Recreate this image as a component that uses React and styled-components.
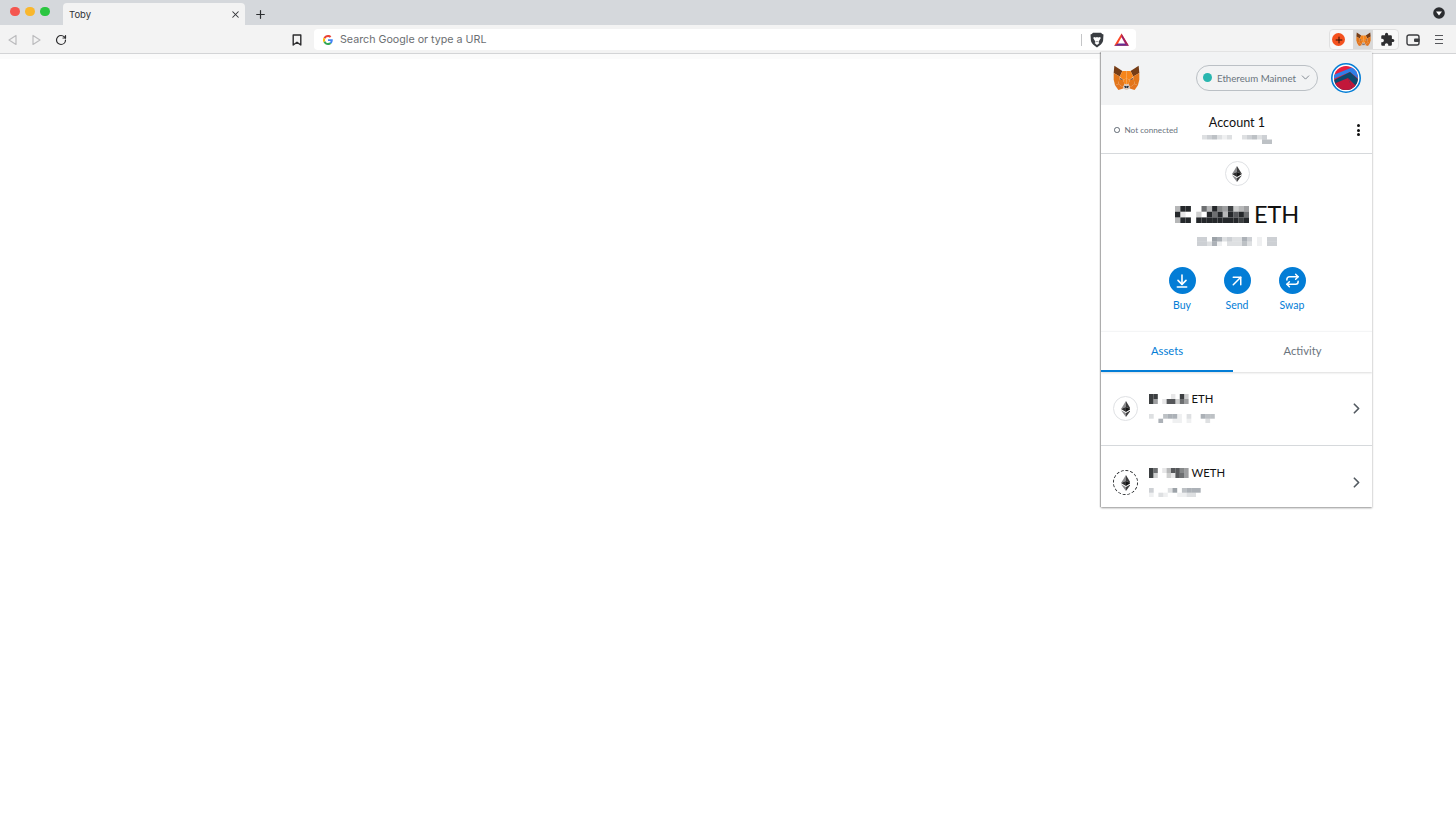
import React from 'react';
import styled, { createGlobalStyle } from 'styled-components';
import { ArrowDownToLine, ArrowUpRight, ChevronDown, ChevronRight, Plus, Repeat, RotateCw, X } from 'lucide-react';
import { MdExtension } from 'react-icons/md';

const GlobalStyle = createGlobalStyle`
  html, body { margin: 0; padding: 0; height: 100%; background: #fff; overflow: hidden; }
  #root { height: 100%; }
  * { box-sizing: border-box; }
`;

const Page = styled.div`
  position: relative;
  height: 819px;
  background: #fff;
  font-family: Inter, 'Liberation Sans', sans-serif;
`;

/* browser chrome */
const TabStrip = styled.div`
  display: flex;
  align-items: flex-end;
  height: 25px;
  padding-right: 11px;
  background: #d5d8dc;
`;

const Lights = styled.div`
  display: flex;
  gap: 5.5px;
  align-self: flex-start;
  width: 63px;
  padding: 6.5px 0 0 10px;
`;

const Light = styled.span`
  width: 9.5px;
  height: 9.5px;
  border-radius: 50%;
  background: ${p => p.$color};
`;

const Tab = styled.div`
  display: flex;
  align-items: center;
  justify-content: space-between;
  width: 182px;
  height: 22px;
  padding: 0 4px 0 6px;
  border-radius: 4px 4px 0 0;
  background: #f3f3f3;
  color: #303236;
  font-size: 9.5px;
`;

const NewTab = styled.div`
  display: flex;
  align-items: center;
  height: 22px;
  margin-left: 9px;
  color: #2b2d30;
`;

const TabMenu = styled.div`
  margin-left: auto;
  align-self: center;
  display: flex;
`;

const Toolbar = styled.div`
  display: flex;
  align-items: center;
  height: 29px;
  padding-top: 1px;
  border-bottom: 1px solid #d3d4d6;
  background: #f3f3f3;
`;

const NavIcons = styled.div`
  display: flex;
  align-items: center;
  gap: 13px;
  width: 314px;
  padding-left: 6.5px;
  color: #2c2c2e;
`;

const BookmarkSlot = styled.span`
  display: flex;
  margin-left: 212px;
`;

const Omnibox = styled.div`
  display: flex;
  align-items: center;
  width: 822px;
  height: 21px;
  padding: 0 7px 0 9px;
  border-radius: 4px;
  background: #fff;
`;

const OmniText = styled.span`
  flex: 1;
  margin-left: 7px;
  color: #6b6e72;
  font-size: 10.7px;
`;

const OmniDivider = styled.span`
  width: 1px;
  height: 12px;
  margin-right: 8px;
  background: #c4c5c7;
`;

const OmniIcons = styled.div`
  display: flex;
  align-items: center;
  gap: 10px;
`;

const ExtensionGroup = styled.div`
  display: flex;
  align-items: stretch;
  width: 70px;
  height: 21px;
  margin-left: 193px;
  border: 1px solid #e0e0e0;
  border-radius: 4px;
  background: #f8f8f8;
`;

const ExtensionCell = styled.div`
  display: flex;
  align-items: center;
  justify-content: center;
  width: ${p => p.$w}px;
  padding-right: ${p => p.$trim || 0}px;
  padding-left: ${p => p.$nudge || 0}px;
  background: ${p => (p.$active ? '#d9d9d9' : 'transparent')};
  color: #2e2e30;
`;

const OrangeDot = styled.span`
  display: flex;
  align-items: center;
  justify-content: center;
  width: 13px;
  height: 13px;
  border-radius: 50%;
  background: #f4511e;
  color: #2a1208;
`;

const EndIcons = styled.div`
  display: flex;
  align-items: center;
  gap: 14px;
  margin-left: 7px;
`;

const HeaderFade = styled.div`
  height: 5px;
  margin-right: 356px;
  background: #fbfbfb;
`;

/* wallet popup */
const Popup = styled.div`
  position: absolute;
  top: 52px;
  left: 1101px;
  width: 271px;
  height: 455px;
  display: flex;
  flex-direction: column;
  overflow: hidden;
  background: #fff;
  box-shadow: -1px 0 1px rgba(0, 0, 0, 0.22), 0 1px 2px rgba(0, 0, 0, 0.4);
  font-family: Lato, 'Open Sans', sans-serif;
`;

const PopupHeader = styled.div`
  display: flex;
  flex-shrink: 0;
  align-items: center;
  height: 53px;
  padding: 0 11px 2px 12px;
  background: #f2f3f4;
`;

const NetworkPill = styled.div`
  display: flex;
  align-items: center;
  width: 122px;
  height: 26px;
  margin-left: auto;
  margin-right: 13px;
  padding: 0 5px 0 6px;
  border: 1px solid #bbc0c5;
  border-radius: 13px;
  color: #6a737d;
  font-size: 9.7px;
`;

const NetworkDot = styled.span`
  width: 9px;
  height: 9px;
  margin-right: 5px;
  border-radius: 50%;
  background: #29b6af;
`;

const NetworkName = styled.span`
  flex: 1;
  white-space: nowrap;
`;

const AccountBar = styled.div`
  position: relative;
  display: flex;
  flex-shrink: 0;
  flex-direction: column;
  align-items: center;
  height: 49px;
  padding-top: 10px;
  border-bottom: 1px solid #d6d9dc;
`;

const AccountName = styled.div`
  height: 17px;
  margin-bottom: 3px;
  margin-left: 1px;
  color: #111;
  font-size: 12.6px;
  line-height: 16px;
`;

const ConnectionStatus = styled.div`
  position: absolute;
  top: 20px;
  left: 13px;
  display: flex;
  align-items: center;
  gap: 5px;
  color: #6a737d;
  font-size: 8.2px;
`;

const StatusRing = styled.span`
  width: 5.5px;
  height: 5.5px;
  border: 1px solid #5f6873;
  border-radius: 50%;
`;

const Kebab = styled.div`
  position: absolute;
  top: 19px;
  right: 12px;
  display: flex;
  flex-direction: column;
  gap: 1.5px;
`;

const KebabDot = styled.span`
  width: 3px;
  height: 3px;
  border-radius: 50%;
  background: #111;
`;

const Balance = styled.div`
  display: flex;
  flex-shrink: 0;
  flex-direction: column;
  align-items: center;
  height: 177px;
  padding-top: 7px;
  padding-left: 1px;
`;

const TokenCircle = styled.div`
  display: flex;
  align-items: center;
  justify-content: center;
  flex-shrink: 0;
  width: ${p => p.$size}px;
  height: ${p => p.$size}px;
  border-radius: 50%;
  border: 1px ${p => (p.$dashed ? 'dashed #24272a' : 'solid #dfe1e4')};
`;

const BalanceRow = styled.div`
  display: flex;
  align-items: center;
  gap: 5px;
  margin-top: 14px;
  color: #111;
  font-size: 23.5px;
  line-height: 29px;
`;

const BalanceFiat = styled.div`
  display: flex;
  margin-top: 8px;
`;

const Actions = styled.div`
  display: flex;
  justify-content: center;
  gap: 28px;
  margin-top: 21px;
`;

const Action = styled.div`
  display: flex;
  flex-direction: column;
  align-items: center;
  gap: 5px;
  width: 27px;
  color: #037dd6;
  font-size: 10.5px;
`;

const ActionCircle = styled.span`
  display: flex;
  align-items: center;
  justify-content: center;
  width: 27px;
  height: 27px;
  border-radius: 50%;
  background: #037dd6;
  color: #fff;
`;

const Tabs = styled.div`
  display: flex;
  flex-shrink: 0;
  height: 41px;
  border-top: 1px solid #f4f5f6;
  box-shadow: 0 1px 2px rgba(0, 0, 0, 0.14);
`;

const TabItem = styled.div`
  display: flex;
  align-items: center;
  justify-content: center;
  width: ${p => p.$w}px;
  padding-bottom: 1px;
  border-bottom: 2px solid ${p => (p.$active ? '#037dd6' : 'transparent')};
  color: ${p => (p.$active ? '#037dd6' : '#6a737d')};
  font-size: 11.2px;
`;

const AssetRow = styled.div`
  display: flex;
  flex-shrink: 0;
  align-items: center;
  height: 74px;
  padding: 0 7px 0 12px;
  border-bottom: 1px solid #d6d9dc;
`;

const AssetInfo = styled.div`
  flex: 1;
  display: flex;
  flex-direction: column;
  gap: 9px;
  margin-left: 11px;
  margin-top: -1px;
`;

const AssetTitle = styled.div`
  display: flex;
  align-items: center;
  gap: 3px;
  height: 12px;
  color: #111;
  font-size: 11.3px;
`;

const AssetChevron = styled.span`
  display: flex;
  color: #535a61;
`;

// blurred-out numbers, each digit is how dark the block is
const Mosaic = ({ rows, cell, cellH, tint = [36, 39, 42] }) => {
  const h = cellH || cell;
  const cols = rows[0].length;
  return (
    <svg width={cols * cell} height={rows.length * h} style={{ display: 'block', filter: 'blur(0.35px)' }}>
      {rows.map((row, y) =>
        row.split('').map((c, x) =>
          c === '0' ? null : (
            <rect
              key={`${x}-${y}`}
              x={x * cell}
              y={y * h}
              width={cell}
              height={h}
              fill={`rgba(${tint.join(',')},${Number(c) / 9})`}
            />
          )
        )
      )}
    </svg>
  );
};

const EthMark = ({ size = 14 }) => (
  <svg width={size * 0.62} height={size} viewBox="0 0 10 16">
    <polygon points="5,0 5,6 0,8.1" fill="#8a8a8c" />
    <polygon points="5,0 10,8.1 5,6" fill="#3c3c3d" />
    <polygon points="5,6 5,11 0,8.1" fill="#2f2f30" />
    <polygon points="5,6 10,8.1 5,11" fill="#141414" />
    <polygon points="0,9.2 5,16 5,12.1" fill="#8a8a8c" />
    <polygon points="10,9.2 5,16 5,12.1" fill="#3c3c3d" />
  </svg>
);

const foxHalf = [
  ['2,1 14,9 10,17 1,12', '#763d16'],
  ['14,9 20,9 20,20 15,22 10,17', '#f6851b'],
  ['1,12 10,17 8,28 3,30 1,22', '#e2761b'],
  ['10,17 11,22 15,22 17,28 15,33 8,28', '#e4761b'],
  ['15,22 20,20 20,29 17,28', '#f6851b'],
  ['3,30 8,28 15,33 15,35 8,37', '#e4751f'],
  ['15,33 17,28 20,29 20,37 15,35', '#d7c1b3'],
  ['10.5,18.5 15,22 11,22', '#763d16'],
  ['16.5,31 20,31 20,34 18,34', '#233447'],
];

const Fox = ({ size }) => (
  <svg width={size} height={size * 0.95} viewBox="0 0 40 38">
    {foxHalf.map(([points, fill]) => (
      <polygon key={points} points={points} fill={fill} />
    ))}
    <g transform="translate(40,0) scale(-1,1)">
      {foxHalf.map(([points, fill]) => (
        <polygon key={points} points={points} fill={fill} />
      ))}
    </g>
  </svg>
);

const Identicon = () => (
  <svg width="30" height="30" viewBox="0 0 30 30">
    <defs>
      <clipPath id="identicon-clip">
        <circle cx="15" cy="15" r="12" />
      </clipPath>
    </defs>
    <circle cx="15" cy="15" r="14.2" fill="#fff" stroke="#037dd6" strokeWidth="1.6" />
    <g clipPath="url(#identicon-clip)">
      <rect width="30" height="30" fill="#e8203f" />
      <polygon points="0,13 22,4 30,12 30,18 19,9 0,17" fill="#2f7fe8" />
      <polygon points="3,17 19,9 30,19 30,30 3,30" fill="#0c4a6e" />
      <polygon points="0,22 17,15 23,30 0,30" fill="#c2173a" />
      <polygon points="17,15 26,24 23,30" fill="#c2173a" />
    </g>
  </svg>
);

const GoogleG = () => (
  <svg width="10" height="10" viewBox="0 0 48 48">
    <path fill="#EA4335" d="M24 9.5c3.5 0 6.700 1.200 9.200 3.600l6.900-6.900C35.900 2.400 30.500 0 24 0 14.600 0 6.500 5.400 2.600 13.200l8 6.200C12.500 13.600 17.800 9.500 24 9.500z" />
    <path fill="#4285F4" d="M46.900 24.500c0-1.600-.1-3.100-.4-4.500H24v9h12.900c-.6 3-2.200 5.500-4.700 7.200l7.700 6c4.500-4.200 7-10.300 7-17.700z" />
    <path fill="#FBBC05" d="M10.500 28.600c-.5-1.400-.8-3-.8-4.600s.3-3.200.8-4.600l-8-6.200C.9 16.500 0 20.100 0 24s.9 7.500 2.600 10.800l7.900-6.200z" />
    <path fill="#34A853" d="M24 48c6.500 0 11.900-2.100 15.900-5.800l-7.700-6c-2.200 1.400-4.900 2.300-8.200 2.300-6.200 0-11.500-4.200-13.400-9.800l-8 6.200C6.500 42.600 14.600 48 24 48z" />
  </svg>
);

const BraveLion = () => (
  <svg width="14" height="16" viewBox="0 0 14 16">
    <path d="M3 .8h8l1.200 1.300 1.300.3-.4 6.200C12.800 11 9.500 14.300 7 15.400 4.500 14.300 1.200 11 .9 8.600L.5 2.400l1.300-.3z" fill="#3a3d42" />
    <path d="M3.800 5l2.100.5L7 5l1.100.5L10.200 5l.5 1.300L8.400 10l1 1.100L7 13l-2.400-1.900 1-1.100L3.300 6.300z" fill="#fff" />
    <path d="M6 9.200h2l-1 1.100z" fill="#3a3d42" />
  </svg>
);

const BatTriangle = () => (
  <svg width="15" height="13" viewBox="0 0 15 13">
    <polygon points="7.500,0.500 14.800,12.800 0.200,12.800" fill="#ff4724" />
    <polygon points="7.500,0.500 14.800,12.800 7.500,8.500" fill="#9e1f63" />
    <polygon points="0.200,12.800 14.800,12.800 7.500,8.500" fill="#662d91" />
    <polygon points="7.500,4.300 11,10.400 4,10.400" fill="#fff" />
  </svg>
);

const Triangle = ({ flip }) => (
  <svg width="11" height="12" viewBox="0 0 11 12" style={{ transform: flip ? 'scaleX(-1)' : 'none' }}>
    <polygon points="9,1.500 9,10.500 2,6" fill="none" stroke="#bcbcbe" strokeWidth="1.200" strokeLinejoin="round" />
  </svg>
);

const Bookmark = () => (
  <svg width="10" height="12" viewBox="0 0 10 12">
    <path d="M1.200 1h7.600v10L5 8.200 1.200 11z" fill="none" stroke="#2c2c2e" strokeWidth="1.400" strokeLinejoin="round" />
  </svg>
);

const WalletIcon = () => (
  <svg width="14" height="12" viewBox="0 0 14 12">
    <rect x="1" y="1" width="12" height="10" rx="2" fill="none" stroke="#3b3c3f" strokeWidth="1.400" />
    <rect x="8" y="4.500" width="5.500" height="3.500" rx="1" fill="#3b3c3f" />
  </svg>
);

const Hamburger = () => (
  <svg width="10" height="11" viewBox="0 0 10 11">
    <path d="M1 1.500h8M1 5.500h8M1 9.500h8" stroke="#55565a" strokeWidth="1.200" />
  </svg>
);

const TabMenuDot = () => (
  <svg width="12" height="12" viewBox="0 0 12 12">
    <circle cx="6" cy="6" r="5.800" fill="#2b2d30" />
    <polygon points="3,4.500 9,4.500 6,8.500" fill="#fff" />
  </svg>
);

const assets = [
  {
    symbol: 'ETH',
    dashed: false,
    title: ['880001082', '840177264'],
    sub: ['20045510200544', '00500110100020'],
  },
  {
    symbol: 'WETH',
    dashed: true,
    title: ['860137754', '820021764'],
    sub: ['30002604555', '10210011220'],
  },
];

const App = () => (
  <Page>
    <GlobalStyle />
    <TabStrip>
      <Lights>
        <Light $color="#f4564f" />
        <Light $color="#f9b72d" />
        <Light $color="#2ac640" />
      </Lights>
      <Tab>
        Toby
        <X size={11} strokeWidth={2.2} />
      </Tab>
      <NewTab>
        <Plus size={13} strokeWidth={2.2} />
      </NewTab>
      <TabMenu>
        <TabMenuDot />
      </TabMenu>
    </TabStrip>

    <Toolbar>
      <NavIcons>
        <Triangle />
        <Triangle flip />
        <RotateCw size={12} strokeWidth={2.4} />
        <BookmarkSlot>
          <Bookmark />
        </BookmarkSlot>
      </NavIcons>
      <Omnibox>
        <GoogleG />
        <OmniText>Search Google or type a URL</OmniText>
        <OmniDivider />
        <OmniIcons>
          <BraveLion />
          <BatTriangle />
        </OmniIcons>
      </Omnibox>
      <ExtensionGroup>
        <ExtensionCell $w={23} $trim={6}>
          <OrangeDot>
            <Plus size={10} strokeWidth={2.4} />
          </OrangeDot>
        </ExtensionCell>
        <ExtensionCell $w={20} $active>
          <Fox size={15} />
        </ExtensionCell>
        <ExtensionCell $w={25} $nudge={4}>
          <MdExtension size={15} />
        </ExtensionCell>
      </ExtensionGroup>
      <EndIcons>
        <WalletIcon />
        <Hamburger />
      </EndIcons>
    </Toolbar>
    <HeaderFade />

    <Popup>
      <PopupHeader>
        <Fox size={27} />
        <NetworkPill>
          <NetworkDot />
          <NetworkName>Ethereum Mainnet</NetworkName>
          <ChevronDown size={13} strokeWidth={1.5} />
        </NetworkPill>
        <Identicon />
      </PopupHeader>

      <AccountBar>
        <ConnectionStatus>
          <StatusRing />
          Not connected
        </ConnectionStatus>
        <AccountName>Account 1</AccountName>
        <Mosaic rows={['23421200234230', '00000000000044']} cell={5} cellH={4.5} tint={[106, 115, 125]} />
        <Kebab>
          <KebabDot />
          <KebabDot />
          <KebabDot />
        </Kebab>
      </AccountBar>

      <Balance>
        <TokenCircle $size={25}>
          <EthMark size={16} />
        </TokenCircle>
        <BalanceRow>
          <Mosaic rows={['39900639548234', '91002096939796', '39909999999989']} cell={5.3} cellH={5.7} />
          ETH
        </BalanceRow>
        <BalanceFiat>
          <Mosaic
            rows={['3306523225301033', '3325102224201033']}
            cell={5}
            cellH={4.5}
            tint={[106, 115, 125]}
          />
        </BalanceFiat>
        <Actions>
          <Action>
            <ActionCircle>
              <ArrowDownToLine size={16} strokeWidth={2.4} />
            </ActionCircle>
            Buy
          </Action>
          <Action>
            <ActionCircle>
              <ArrowUpRight size={18} strokeWidth={2} />
            </ActionCircle>
            Send
          </Action>
          <Action>
            <ActionCircle>
              <Repeat size={15} strokeWidth={2.4} />
            </ActionCircle>
            Swap
          </Action>
        </Actions>
      </Balance>

      <Tabs>
        <TabItem $w={132} $active>Assets</TabItem>
        <TabItem $w={139}>Activity</TabItem>
      </Tabs>

      {assets.map(a => (
        <AssetRow key={a.symbol}>
          <TokenCircle $size={25} $dashed={a.dashed}>
            <EthMark size={16} />
          </TokenCircle>
          <AssetInfo>
            <AssetTitle>
              <Mosaic rows={a.title} cell={4.4} cellH={5} />
              {a.symbol}
            </AssetTitle>
            <Mosaic rows={a.sub} cell={4.7} tint={[106, 115, 125]} />
          </AssetInfo>
          <AssetChevron>
            <ChevronRight size={17} strokeWidth={2.4} />
          </AssetChevron>
        </AssetRow>
      ))}
    </Popup>
  </Page>
);

export default App;
